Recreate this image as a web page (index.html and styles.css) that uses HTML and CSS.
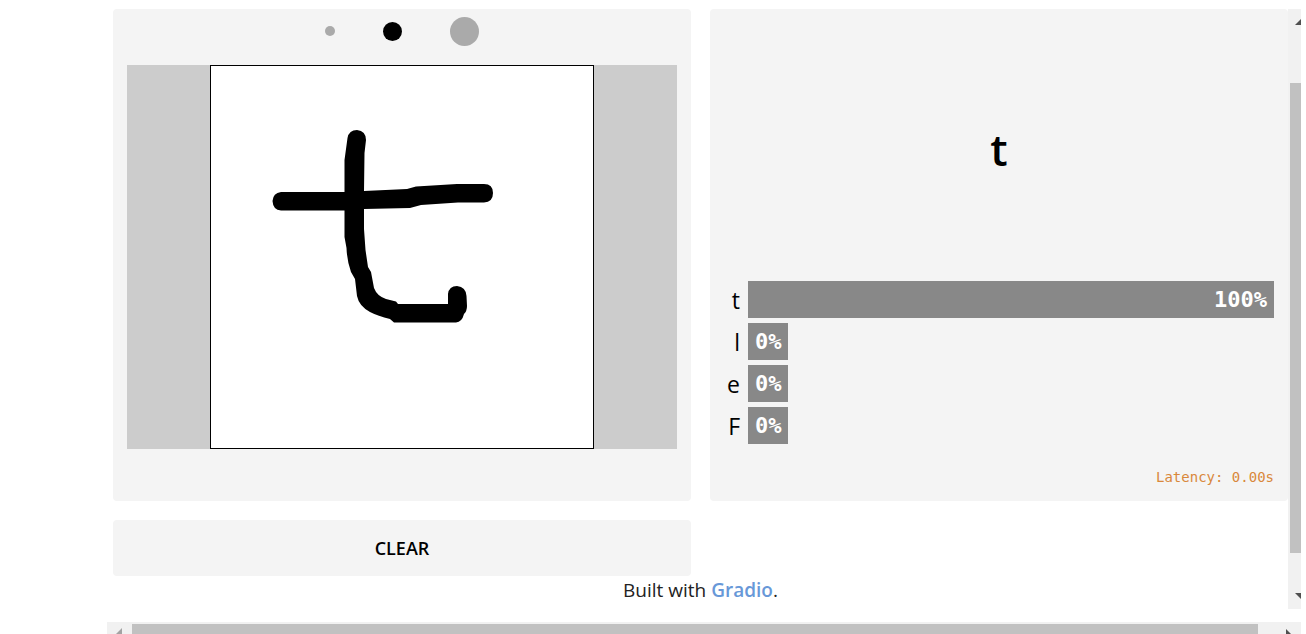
FILE: index.html
```html
<!DOCTYPE html>
<html lang="en">
<head>
<meta charset="utf-8">
<meta name="viewport" content="width=device-width, initial-scale=1">
<title>Gradio</title>
<link rel="stylesheet" href="styles.css">
</head>
<body>
<div class="frame">
  <div class="viewport">
    <main class="content">
      <div class="panels">
        <section class="column" aria-label="Input">
          <div class="panel">
            <div class="brushes">
              <button class="brush brush-small" type="button" aria-label="Small brush"></button>
              <button class="brush brush-medium" type="button" aria-label="Medium brush"></button>
              <button class="brush brush-large" type="button" aria-label="Large brush"></button>
            </div>
            <div class="sketch">
              <svg class="canvas" viewBox="210 65 384 384" role="img" aria-label="Handwritten letter t">
                <path d="M272.500 201Q273 193 281 192H344.500V160L347.500 138Q349 130 357 130Q366 131 366 140L364.500 153L364 191L407 189L416 186.500L457 184H484Q493 184 493 193Q493 202 484 202.500H458L421 205L410 208L364 209V229L365.500 250L368 267L371 272L374 288Q377 296 386 299L396 301.500L398 304H448V294Q449 286 457 286Q466 287 466.500 296L467 306Q467 311 464 314Q462 322 456 322.500H394L390 319Q378 316 370 312Q359 306 357 296L355 279L351 272Q347 261 346.500 248L344.500 237V210.500H281Q273 210 272.500 201Z"/>
              </svg>
            </div>
          </div>
          <button class="clear" type="button">CLEAR</button>
        </section>
        <section class="column" aria-label="Output">
          <div class="panel output">
            <div class="result">t</div>
            <div class="scores">
              <span class="name">t</span><div class="track"><div class="bar" style="width:100%">100%</div></div>
              <span class="name">l</span><div class="track"><div class="bar" style="width:0%">0%</div></div>
              <span class="name">e</span><div class="track"><div class="bar" style="width:0%">0%</div></div>
              <span class="name">F</span><div class="track"><div class="bar" style="width:0%">0%</div></div>
            </div>
            <div class="latency">Latency: 0.00s</div>
          </div>
        </section>
      </div>
      <footer class="footer">Built with <a href="#">Gradio</a>.</footer>
    </main>
    <div class="vscroll" aria-hidden="true">
      <svg class="arrow-y" viewBox="0 0 13 24"><path d="M7 16L13 10V16Z"/></svg>
      <div class="vthumb"></div>
      <svg class="arrow-y" viewBox="0 0 13 24"><path d="M7 8H13V14Z"/></svg>
    </div>
  </div>
  <div class="hscroll" aria-hidden="true">
    <svg class="arrow-x arrow-off" viewBox="0 0 25 12"><path d="M9 12L15 6V12Z"/></svg>
    <div class="hthumb"></div>
    <svg class="arrow-x arrow-end" viewBox="0 0 43 12"><path d="M28 7L33 12H28Z"/></svg>
  </div>
</div>
</body>
</html>
```
FILE: styles.css
```css
* {
  box-sizing: border-box;
}

body {
  margin: 0;
  background: #fff;
  color: #000;
  font-family: "Open Sans", sans-serif;
  font-size: 19px;
  line-height: 24px;
}

button {
  border: 0;
  padding: 0;
  color: inherit;
  font: inherit;
  cursor: pointer;
}

.frame {
  padding: 9px 5px 0 107px;
}

.viewport {
  display: flex;
}

.content {
  flex: 1;
  min-width: 0;
  padding: 0 0 7px 6px;
}

.panels {
  display: grid;
  grid-template-columns: 1fr 1fr;
  gap: 19px;
}

.column {
  display: flex;
  flex-direction: column;
  gap: 19px;
}

.panel {
  padding: 0 14px 52px;
  border-radius: 4px;
  background: #f4f4f4;
}

.brushes {
  display: flex;
  align-items: center;
  justify-content: center;
  gap: 48px;
  height: 44px;
  margin-bottom: 12px;
}

.brush {
  border-radius: 50%;
  background: #aaa;
}

.brush-small {
  width: 10px;
  height: 10px;
}

.brush-medium {
  width: 19px;
  height: 19px;
  background: #000;
}

.brush-large {
  width: 29px;
  height: 29px;
}

.sketch {
  display: flex;
  justify-content: center;
  background: #ccc;
}

.canvas {
  width: 384px;
  height: 384px;
  outline: 1px solid #000;
  outline-offset: -1px;
  background: #fff;
}

.clear {
  padding: 16px;
  border-radius: 4px;
  background: #f4f4f4;
  font-size: 18px;
  font-weight: 600;
}

.output {
  padding-bottom: 12px;
}

.result {
  display: flex;
  align-items: center;
  justify-content: center;
  height: 272px;
  padding-top: 8px;
  font-size: 44px;
  font-weight: 600;
}

.scores {
  display: grid;
  grid-template-columns: 16px 1fr;
  gap: 5px 8px;
}

.name {
  justify-self: end;
  height: 37px;
  font-size: 23px;
  line-height: 38px;
}

.bar {
  min-width: 40px;
  padding: 0 7px;
  background: #888;
  color: #fff;
  font-family: "DejaVu Sans Mono", monospace;
  font-size: 22px;
  font-weight: 700;
  line-height: 38px;
  height: 37px;
  text-align: right;
}

.latency {
  margin-top: 21px;
  color: #d9883b;
  font-family: "DejaVu Sans Mono", monospace;
  font-size: 14px;
  text-align: right;
}

.footer {
  padding-top: 2px;
  color: #222;
  text-align: center;
}

.footer a {
  color: #6898d8;
  font-weight: 600;
  text-decoration: none;
}

.vscroll {
  display: flex;
  flex-direction: column;
  width: 13px;
  background: #f1f1f1;
}

.vthumb {
  flex: 1;
  margin: 50px 0 32px 2px;
  background: #c1c1c1;
}

.arrow-y {
  width: 13px;
  height: 24px;
  fill: #505050;
}

.hscroll {
  display: flex;
  height: 12px;
  margin-top: 13px;
  background: #f1f1f1;
}

.hthumb {
  flex: 1;
  margin-top: 2px;
  background: #c1c1c1;
}

.arrow-x {
  width: 25px;
  height: 12px;
  fill: #505050;
}

.arrow-off {
  fill: #a3a3a3;
}

.arrow-end {
  width: 43px;
}
```
